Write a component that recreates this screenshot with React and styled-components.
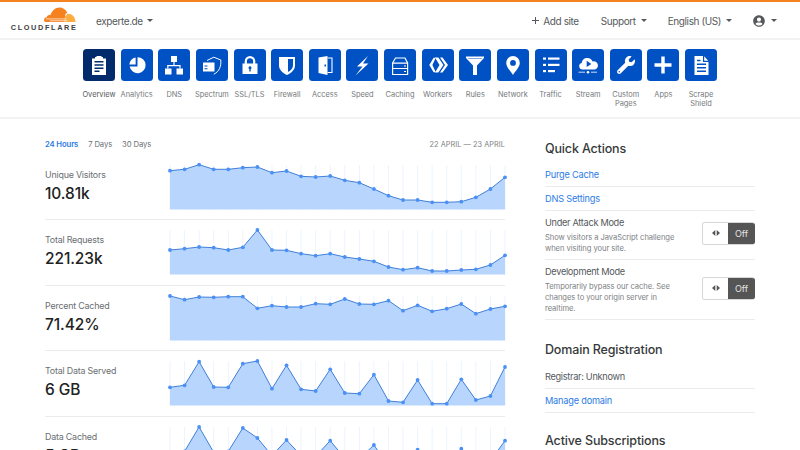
import React from 'react';
import styled, { createGlobalStyle } from 'styled-components';
import { FaWrench, FaUserCircle } from 'react-icons/fa';

const Global = createGlobalStyle`
  html, body { margin: 0; padding: 0; background: #fff; height: 450px; overflow: hidden; }
  body { font-family: Inter, "Liberation Sans", sans-serif; color: #36393a; }
  * { box-sizing: border-box; }
`;

const Page = styled.div`width: 800px; height: 450px; overflow: hidden; border-top: 2px solid #f6821f;`;
const Header = styled.header`
  height: 38px; display: flex; align-items: center; border-bottom: 2px solid #f2f2f2; padding: 1.5px 23px 0 10px;
`;
const Logo = styled.div`width: 66px; height: 29px; display: flex; flex-direction: column; align-items: flex-end; margin-top: .5px;`;
const LogoMark = styled.svg`width: 32px; height: 15.5px; display: block; margin: .5px 0 0;`;
const LogoText = styled.span`
  font: 800 7.3px/8px "Liberation Sans", sans-serif; letter-spacing: 1.65px; color: #404041; white-space: nowrap; margin: 1px -1.5px 0 0;
`;
const Zone = styled.span`font-size: 10px; letter-spacing: -0.4px; color: #55595c; margin-left: 20px;`;
const Caret = styled.i`
  display: inline-block; width: 0; height: 0; border-left: 3.7px solid transparent; border-right: 3.7px solid transparent;
  border-top: 3.7px solid #55595c; margin-left: ${p => p.$gap ?? 5}px;
`;
const Spacer = styled.div`flex: 1;`;
const HeadLink = styled.span`
  display: inline-flex; align-items: center; font-size: 10px; letter-spacing: -0.4px; color: #55595c; margin-left: ${p => p.$left}px; white-space: nowrap;
`;
const Plus = styled.svg`width: 7px; height: 7px; margin-right: 4px;`;

const Nav = styled.nav`
  height: 79px; padding-top: 9px; display: flex; justify-content: center; border-bottom: 2px solid #f2f2f2;
`;
const NavItem = styled.div`width: 37.63px; display: flex; flex-direction: column; align-items: center;`;
const Tile = styled.div`
  width: 32px; height: 32px; border-radius: 3.5px; background: ${p => (p.$active ? '#012b6b' : '#0051c3')};
  display: flex; align-items: center; justify-content: center; color: #fff;
`;
const Glyph = styled.svg`width: 32px; height: 32px; display: block;`;
const NavLabel = styled.span`
  margin-top: 8.5px; font-size: 7.4px; line-height: 9.6px; text-align: center; width: 37.6px;
  color: ${p => (p.$active ? '#55595c' : '#75797c')};
`;

const Main = styled.main`display: flex; padding-left: 45px; gap: 40px;`;
const Left = styled.section`width: 460px;`;
const Tabs = styled.div`display: flex; align-items: center; height: 12px; margin-top: 19px; margin-bottom: 4.5px;`;
const Tab = styled.span`
  font-size: 7.7px; letter-spacing: -0.12px; margin-right: 10px; font-weight: ${p => (p.$on ? 600 : 400)}; color: ${p => (p.$on ? '#2c7be5' : '#6d7275')};
`;
const DateRange = styled.span`margin-left: auto; font-size: 7.3px; color: #7d8184; letter-spacing: 0.06px;`;
const Row = styled.div`
  display: flex; height: 65.5px; padding: 10px 0; border-bottom: 1px solid #ebebeb; flex-shrink: 0;
`;
const Stat = styled.div`width: 125px; padding-top: 4px;`;
const StatLabel = styled.div`font-size: 8.9px; letter-spacing: -0.2px; line-height: 12px; color: #6a6e71;`;
const StatValue = styled.div`font-size: 15.5px; line-height: 19px; font-weight: 500; color: #222; margin-top: 3px; letter-spacing: -0.1px;`;
const Chart = styled.svg`width: 335px; height: 45px; overflow: visible; display: block;`;

const Right = styled.aside`width: 210px; padding-top: 22px;`;
const Title = styled.h2`
  margin: ${p => p.$top ?? 0}px 0 0; font-size: 12.5px; letter-spacing: -0.15px; line-height: 16px; font-weight: 500; color: #36393a;
  padding-bottom: ${p => p.$pad ?? 6}px;
`;
const Item = styled.div`
  padding: 5.5px 0 ${p => (p.$tall ? 5 : 5.5)}px; border-bottom: 1px solid #ebebeb; display: flex; align-items: center; justify-content: space-between;
`;
const Link = styled.a`font-size: 9.2px; letter-spacing: -0.2px; line-height: 12px; color: #2c7be5;`;
const Plain = styled.span`font-size: 9.2px; letter-spacing: -0.3px; line-height: 12px; color: #55595c;`;
const ModeText = styled.div`width: 135px;`;
const ModeName = styled.div`font-size: 9.2px; letter-spacing: -0.3px; line-height: 12px; color: #55595c; margin-bottom: 3px;`;
const ModeDesc = styled.div`font-size: 7.6px; letter-spacing: -0.06px; line-height: 11.3px; color: #7d8184;`;
const Toggle = styled.div`
  width: 53px; height: 23px; display: flex; border-radius: 3px; overflow: hidden; margin-bottom: 4px;
  border: 1px solid #d5d7d8; border-right: 0; border-bottom-width: 1.5px;
`;
const Knob = styled.div`width: 25px; display: flex; align-items: center; justify-content: center; background: #fff;`;
const KnobIcon = styled.svg`width: 8px; height: 6px;`;
const Off = styled.div`
  flex: 1; background: #555; color: #e4e4e4; font-size: 9px; display: flex; align-items: center; justify-content: center; margin: -1px 0 -2px;
`;

const B = '#0051c3';
const icons = {
  Overview: <path fillRule="evenodd" fill="#fff" d="M9 9.5h3V8h1.5V7h5V8H20v1.5h3V26H9zM11.5 12v1.6h9V12zM11.5 15.3v1.5h9v-1.5zM11.5 18.5V20h9v-1.5zM11.5 21.6v1.5h5v-1.5z" />,
  Analytics: <g fill="#fff">
    <path d="M16.5 8.2A8 8 0 1 1 8.7 17.5h7.8z" />
    <path d="M14.6 15.6H8.4A7 7 0 0 1 14.6 8.6z" />
  </g>,
  DNS: <g fill="#fff">
    <rect x="13" y="7" width="6" height="6" /><rect x="7" y="19.5" width="6.5" height="6" /><rect x="18.5" y="19.5" width="6.5" height="6" />
    <path d="M15.4 13h1.2v3h6v3.5h-1.2v-2.3H10.4v2.3H9.2v-3.5h6.2z" />
  </g>,
  Spectrum: <g>
    <path fill="none" stroke="#fff" strokeWidth="1" d="M11 11.5 17.8 8.2 24.8 11c.5 6.5-1.5 11.5-7 14.2" />
    <path fill="#fff" fillRule="evenodd" d="M7 13.5h11.5v9H7zM8.5 16.6v1h3v-1zM8.5 19.3v1h3v-1z" />
  </g>,
  'SSL/TLS': <g>
    <path fill="none" stroke="#fff" strokeWidth="2.2" d="M11.8 15V12.3a4.2 4.2 0 0 1 8.4 0V15" />
    <path fill="#fff" fillRule="evenodd" d="M8.5 14.5h15V25h-15zM16 17.3a1.5 1.5 0 0 0-.7 2.8V22.5h1.4v-2.4a1.5 1.5 0 0 0-.7-2.8z" />
  </g>,
  Firewall: <path fill="#fff" fillRule="evenodd" d="M8 8h16v8.5c0 4.2-3.5 7.5-8 9.5-4.500-2-8-5.300-8-9.500zM17 10v13c2.800-1.500 5-3.800 5-6.500V10z" />,
  Access: <g>
    <path fill="#fff" fillRule="evenodd" d="M9.5 8.5 18.5 7V26L9.5 24zM15.500 15.500v2h1.500v-2z" />
    <path fill="none" stroke="#fff" strokeWidth="1.1" d="M18.5 9h4.500v14.500h-4.500" />
  </g>,
  Speed: <path fill="#fff" d="M22 7 11 17.500h5.500L9.500 26.500 22.500 14.500H17z" />,
  Caching: <g fill="none" stroke="#fff" strokeWidth="1.2">
    <path d="M8.600 14 11.500 9H21l2.600 5v11.500H8.600z" /><path d="M8.600 14.200h15M8.600 19.500h15" />
    <path d="M20 17h2M20 22.500h2" />
  </g>,
  Workers: <g fill="#fff">
    <path d="M10.800 8.700h2.200L9.600 16l3.400 7.300h-2.200L6.500 16z" transform="translate(.8 0)" />
    <path d="M13 8.500h3.400l5 7.500-5 7.500H13L17.500 16z" />
    <path d="M18 8.500h2.500L26 16l-5.500 7.500H18l5-7.500z" />
  </g>,
  Rules: <path fill="#fff" fillRule="evenodd" d="M7 7.500h18V9l-7 7.500V26h-4v-9.500L7 9zM9 9.200l.4.500h13.200l.4-.500z" />,
  Network: <path fill="#fff" fillRule="evenodd" d="M16 7a6.800 6.800 0 0 1 6.800 6.800c0 4.500-4.600 8.500-6.800 12.200-2.200-3.700-6.800-7.700-6.800-12.200A6.800 6.800 0 0 1 16 7zM16 11a2.900 2.900 0 1 0 0 5.800 2.900 2.900 0 0 0 0-5.800z" />,
  Traffic: <g fill="#fff">
    <rect x="8" y="8.500" width="3" height="2.200" /><rect x="13" y="8.500" width="11.500" height="2.200" />
    <rect x="8" y="14.800" width="3" height="2.200" /><rect x="13" y="14.800" width="11.500" height="2.200" />
    <rect x="8" y="21" width="3" height="2.200" /><rect x="13" y="21" width="7" height="2.200" />
  </g>,
  Stream: <g>
    <path fill="#fff" d="M10.500 20.500a3.300 3.300 0 0 1-.8-6.500 5.200 5.200 0 0 1 5.800-5c2.400 0 4.300 1.400 5 3.500a4.100 4.100 0 0 1 2.500 8z" />
    <path fill={B} d="M14.700 11.800 19.300 15l-4.600 3z" />
    <path stroke="#fff" strokeWidth=".8" d="M6.500 23.200h6.500M19 23.200h6" />
    <circle cx="16" cy="23.200" r="1.300" fill="#fff" />
  </g>,
  Apps: <path fill="#fff" d="M14.300 7.500h3.400v6.800h6.800v3.400h-6.800v6.800h-3.400v-6.800H7.500v-3.400h6.800z" />,
  'Scrape Shield': <path fill="#fff" fillRule="evenodd" d="M9.500 7h8.500v6h5.500v13h-14zM19.200 7.300l4 4.500h-4zM12 14.500V16h9v-1.500zM12 18v1.500h9V18zM12 21.500V23h9v-1.500zM12 10.800v1.500h3.500v-1.500z" />,
};

const navItems = ['Overview','Analytics','DNS','Spectrum','SSL/TLS','Firewall','Access','Speed','Caching','Workers','Rules','Network','Traffic','Stream','Custom Pages','Apps','Scrape Shield'];

const charts = [
  { label: 'Unique Visitors', value: '10.81k', top: 105, z: [122,118,104,118,118,113,111,128,123,139,141,138,151,158,177,197,210,210,217,217,215,202,177,142] },
  { label: 'Total Requests', value: '221.23k', top: 300, z: [360,356,351,353,360,352,300,360,361,371,377,371,381,387,394,411,419,413,423,423,420,418,405,376] },
  { label: 'Percent Cached', value: '71.42%', top: 31, z: [31,42,34,35,33,33,68,60,64,64,54,56,40,55,56,45,75,59,77,69,55,84,70,62] },
  { label: 'Total Data Served', value: '6 GB', top: 227, z: [306,300,229,305,306,235,227,310,240,312,317,252,323,325,268,347,351,284,355,355,282,344,332,245] },
  { label: 'Data Cached', value: '5 GB', top: 424, z: [505,497,424,500,497,427,457,510,463,510,512,465,518,520,478,540,545,492,550,550,489,535,525,465] },
];

const STEP = 335 / 23;
const H = 44.5;

function Spark({ top, z }) {
  const pts = z.map((v, i) => [i * STEP, (v - top) / 3]);
  const line = pts.map(p => p.map(n => n.toFixed(1)).join(',')).join(' ');
  return (
    <Chart viewBox="0 0 335 45">
      {pts.map((p, i) => <line key={i} x1={p[0]} x2={p[0]} y1="0" y2={H} stroke="#edf4fe" strokeWidth="1" />)}
      <polygon points={`0,${H} ${line} 335,${H}`} fill="#b8d6fd" />
      <polyline points={line} fill="none" stroke="#3f7fd8" strokeWidth="1" />
      {pts.map((p, i) => <circle key={i} cx={p[0]} cy={p[1]} r="1.9" fill="#4a90f5" />)}
    </Chart>
  );
}

const ToggleOff = () => (
  <Toggle>
    <Knob>
      <KnobIcon viewBox="0 0 8 6"><path fill="#555" d="M3.3 0v6L0 3zM4.7 0v6L8 3z" /></KnobIcon>
    </Knob>
    <Off>Off</Off>
  </Toggle>
);

export default function App() {
  return (
    <Page>
      <Global />
      <Header>
        <Logo>
          <LogoMark viewBox="0 0 33 16">
            <path fill="#f6821f" d="M23 15.5H2.2C.8 15.5 0 14.5 0 13.3c0-1.6 1.2-2.7 2.8-2.800C3.200 8.800 5 8 6.500 8.500 8 4 11.500.5 16 .5c3.700 0 7 2.500 8.200 6-.8 0-1.500.1-2 .4-.7 2.500-.5 5.500.8 8.600z" />
            <path fill="#fbad41" d="M24.500 7c4.300 0 8 3.500 8 8.500H20.500c0-3 1-6.500 4-8.500z" />
            <path stroke="#fff" strokeWidth=".7" d="M2 12.300h21M6 14.200h18" />
          </LogoMark>
          <LogoText>CLOUDFLARE</LogoText>
        </Logo>
        <Zone>experte.de</Zone>
        <Caret $gap={4} />
        <Spacer />
        <HeadLink $left={0}>
          <Plus viewBox="0 0 7 7"><path fill="#55595c" d="M3 0h1v3h3v1H4v3H3V4H0V3h3z" /></Plus>
          Add site
        </HeadLink>
        <HeadLink $left={22}>Support<Caret /></HeadLink>
        <HeadLink $left={21}>English (US)<Caret /></HeadLink>
        <HeadLink $left={21}><FaUserCircle size={12} color="#55595c" /><Caret $gap={6} /></HeadLink>
      </Header>
      <Nav>
        {navItems.map((n, i) => (
          <NavItem key={n}>
            <Tile $active={i === 0}>
              {n === 'Custom Pages'
                ? <FaWrench size={18} />
                : <Glyph viewBox="0 0 32 32">{icons[n]}</Glyph>}
            </Tile>
            <NavLabel $active={i === 0}>{n}</NavLabel>
          </NavItem>
        ))}
      </Nav>
      <Main>
        <Left>
          <Tabs>
            <Tab $on>24 Hours</Tab>
            <Tab>7 Days</Tab>
            <Tab>30 Days</Tab>
            <DateRange>22 APRIL — 23 APRIL</DateRange>
          </Tabs>
          {charts.map(c => (
            <Row key={c.label}>
              <Stat>
                <StatLabel>{c.label}</StatLabel>
                <StatValue>{c.value}</StatValue>
              </Stat>
              <Spark top={c.top} z={c.z} />
            </Row>
          ))}
        </Left>
        <Right>
          <Title>Quick Actions</Title>
          <Item><Link>Purge Cache</Link></Item>
          <Item><Link>DNS Settings</Link></Item>
          <Item $tall>
            <ModeText>
              <ModeName>Under Attack Mode</ModeName>
              <ModeDesc>Show visitors a JavaScript challenge when visiting your site.</ModeDesc>
            </ModeText>
            <ToggleOff />
          </Item>
          <Item $tall>
            <ModeText>
              <ModeName>Development Mode</ModeName>
              <ModeDesc>Temporarily bypass our cache. See changes to your origin server in realtime.</ModeDesc>
            </ModeText>
            <ToggleOff />
          </Item>
          <Title $top={21.5} $pad={7.5}>Domain Registration</Title>
          <Item><Plain>Registrar: Unknown</Plain></Item>
          <Item><Link>Manage domain</Link></Item>
          <Title $top={19.5}>Active Subscriptions</Title>
        </Right>
      </Main>
    </Page>
  );
}
